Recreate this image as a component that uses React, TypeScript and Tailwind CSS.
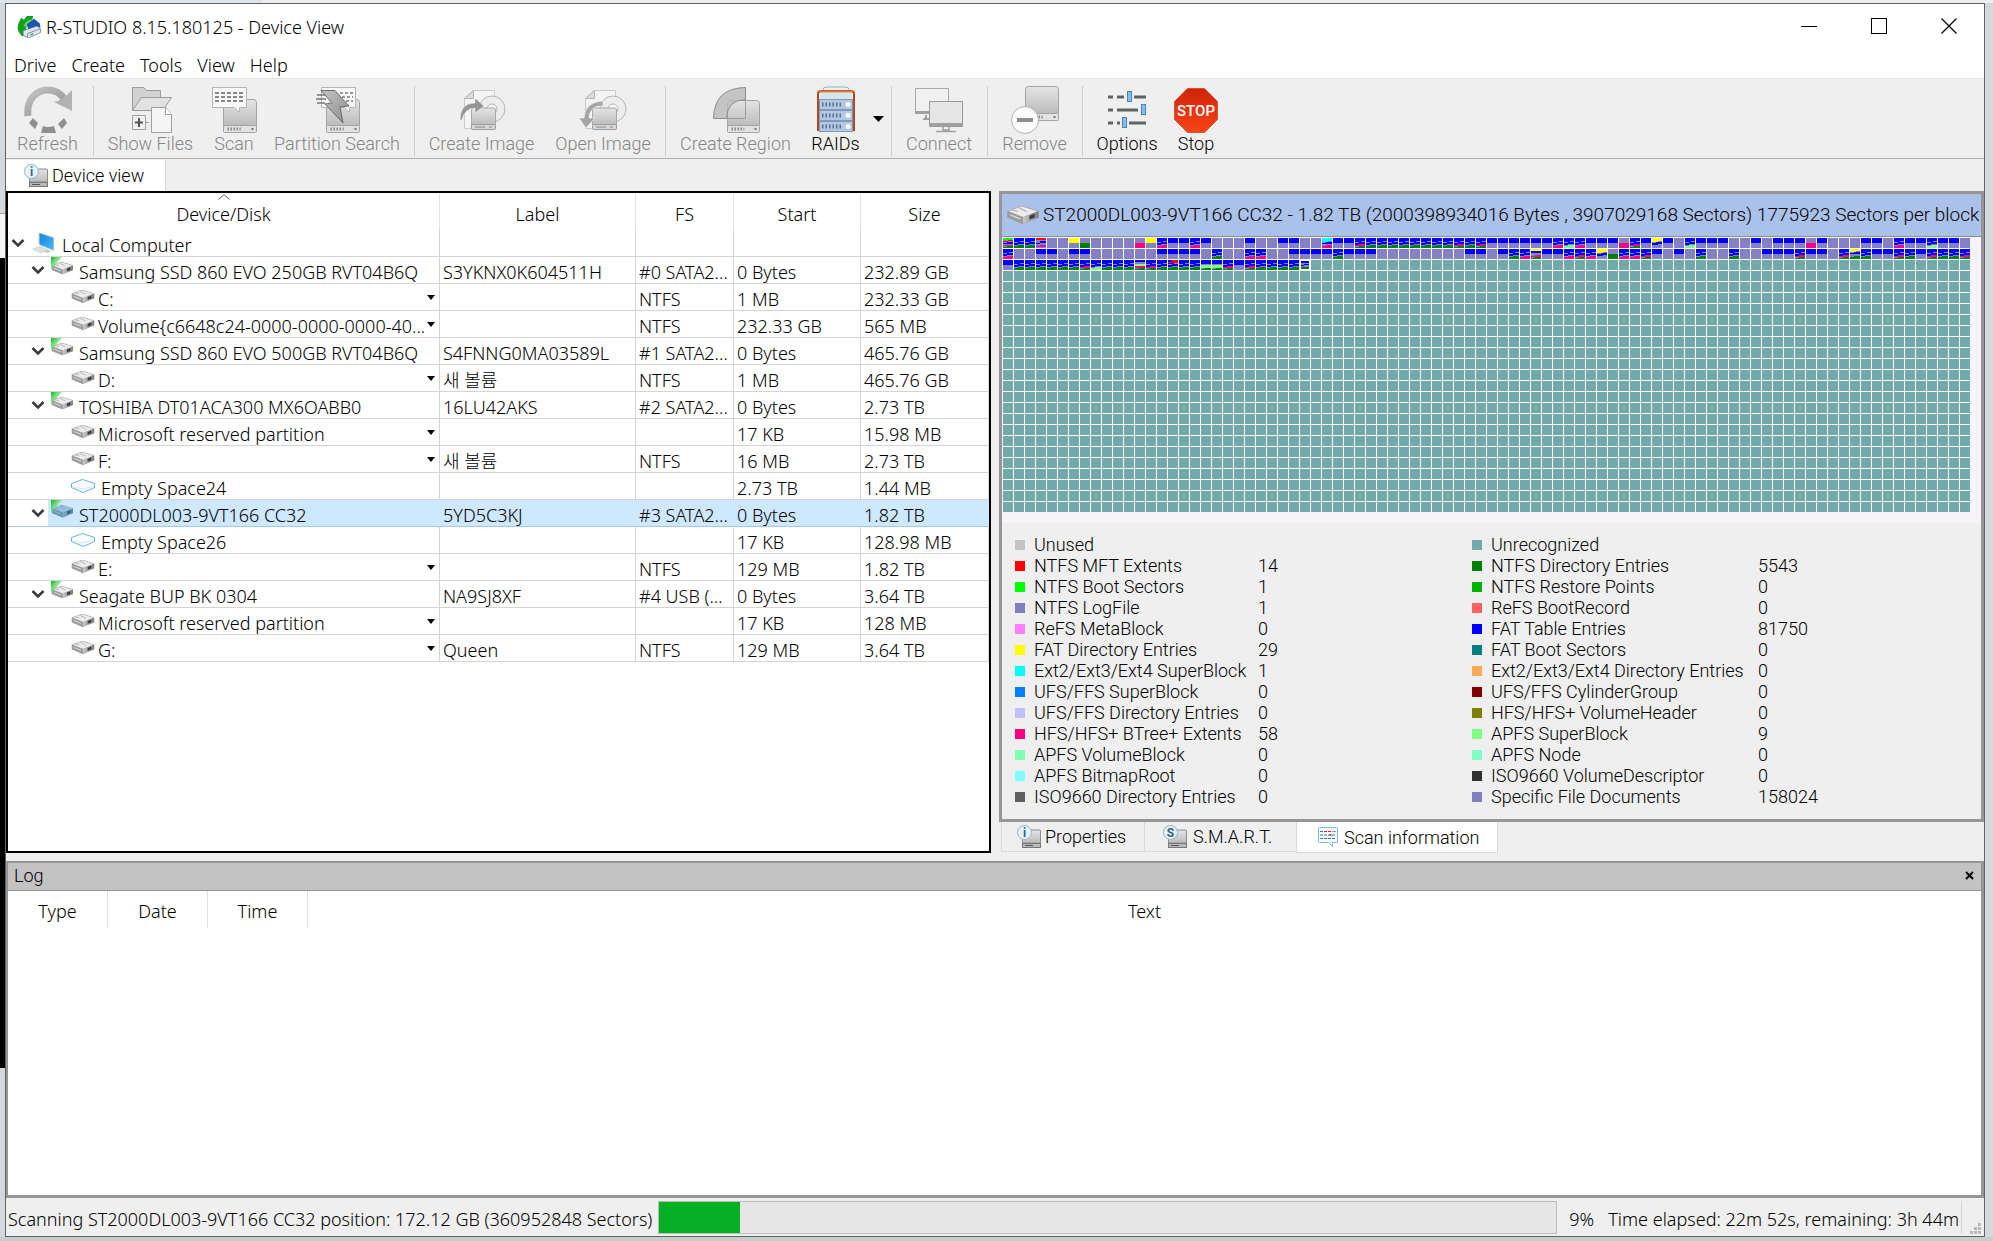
import type { ReactNode } from "react";

type DeviceKind = "computer" | "disk" | "volume" | "empty";

interface DeviceRow {
  kind: DeviceKind;
  name: string;
  label?: string;
  fs?: string;
  start?: string;
  size?: string;
  selected?: boolean;
}

interface LegendItem {
  name: string;
  color: string;
  count?: string;
}

const MENUS = ["Drive", "Create", "Tools", "View", "Help"];

const DEVICES: DeviceRow[] = [
  { kind: "computer", name: "Local Computer" },
  { kind: "disk", name: "Samsung SSD 860 EVO 250GB RVT04B6Q", label: "S3YKNX0K604511H", fs: "#0 SATA2...", start: "0 Bytes", size: "232.89 GB" },
  { kind: "volume", name: "C:", fs: "NTFS", start: "1 MB", size: "232.33 GB" },
  { kind: "volume", name: "Volume{c6648c24-0000-0000-0000-40...", fs: "NTFS", start: "232.33 GB", size: "565 MB" },
  { kind: "disk", name: "Samsung SSD 860 EVO 500GB RVT04B6Q", label: "S4FNNG0MA03589L", fs: "#1 SATA2...", start: "0 Bytes", size: "465.76 GB" },
  { kind: "volume", name: "D:", label: "새 볼륨", fs: "NTFS", start: "1 MB", size: "465.76 GB" },
  { kind: "disk", name: "TOSHIBA DT01ACA300 MX6OABB0", label: "16LU42AKS", fs: "#2 SATA2...", start: "0 Bytes", size: "2.73 TB" },
  { kind: "volume", name: "Microsoft reserved partition", start: "17 KB", size: "15.98 MB" },
  { kind: "volume", name: "F:", label: "새 볼륨", fs: "NTFS", start: "16 MB", size: "2.73 TB" },
  { kind: "empty", name: "Empty Space24", start: "2.73 TB", size: "1.44 MB" },
  { kind: "disk", name: "ST2000DL003-9VT166 CC32", label: "5YD5C3KJ", fs: "#3 SATA2...", start: "0 Bytes", size: "1.82 TB", selected: true },
  { kind: "empty", name: "Empty Space26", start: "17 KB", size: "128.98 MB" },
  { kind: "volume", name: "E:", fs: "NTFS", start: "129 MB", size: "1.82 TB" },
  { kind: "disk", name: "Seagate BUP BK 0304", label: "NA9SJ8XF", fs: "#4 USB (...", start: "0 Bytes", size: "3.64 TB" },
  { kind: "volume", name: "Microsoft reserved partition", start: "17 KB", size: "128 MB" },
  { kind: "volume", name: "G:", label: "Queen", fs: "NTFS", start: "129 MB", size: "3.64 TB" },
];

const LEGEND_LEFT: LegendItem[] = [
  { name: "Unused", color: "#c3c3c3" },
  { name: "NTFS MFT Extents", color: "#ff0000", count: "14" },
  { name: "NTFS Boot Sectors", color: "#00ff00", count: "1" },
  { name: "NTFS LogFile", color: "#8080c0", count: "1" },
  { name: "ReFS MetaBlock", color: "#ff80ff", count: "0" },
  { name: "FAT Directory Entries", color: "#ffff00", count: "29" },
  { name: "Ext2/Ext3/Ext4 SuperBlock", color: "#00ffff", count: "1" },
  { name: "UFS/FFS SuperBlock", color: "#0080ff", count: "0" },
  { name: "UFS/FFS Directory Entries", color: "#c0c0ff", count: "0" },
  { name: "HFS/HFS+ BTree+ Extents", color: "#ff0080", count: "58" },
  { name: "APFS VolumeBlock", color: "#80ffb0", count: "0" },
  { name: "APFS BitmapRoot", color: "#80ffff", count: "0" },
  { name: "ISO9660 Directory Entries", color: "#606060", count: "0" },
];

const LEGEND_RIGHT: LegendItem[] = [
  { name: "Unrecognized", color: "#72aaac" },
  { name: "NTFS Directory Entries", color: "#008000", count: "5543" },
  { name: "NTFS Restore Points", color: "#00b400", count: "0" },
  { name: "ReFS BootRecord", color: "#ff6060", count: "0" },
  { name: "FAT Table Entries", color: "#0000ff", count: "81750" },
  { name: "FAT Boot Sectors", color: "#008080", count: "0" },
  { name: "Ext2/Ext3/Ext4 Directory Entries", color: "#ffa858", count: "0" },
  { name: "UFS/FFS CylinderGroup", color: "#800000", count: "0" },
  { name: "HFS/HFS+ VolumeHeader", color: "#808000", count: "0" },
  { name: "APFS SuperBlock", color: "#80ff80", count: "9" },
  { name: "APFS Node", color: "#80ffc4", count: "0" },
  { name: "ISO9660 VolumeDescriptor", color: "#303030", count: "0" },
  { name: "Specific File Documents", color: "#8080c0", count: "158024" },
];

// One letter per scanned block, see BLOCK_SHAPES
const SCANNED_ROWS = [
  "sggr..yk....pymbbmb...b..bb..cbbMggggggggMgMbbbbbbmlmbbbpMbYb.lbbb..b.bbbpb...bb.mbblbb.",
  "m..bb.bb......bbbb.g..mm..bbbbgbbb........bb.bgmZbbmMmYkmmMb.b.g..g..bbbMbb.MWgbbMgbMggM",
  "bggggggMlgggNMgRgghhMbMggggu",
];

const BLUE = "#0000ff";
const GREEN = "#008000";
const PINK = "#ff0080";
const LIGHT = "#80ff80";

const WAVE = "M0 0h10v3h-4v1h-6zM0 5h4v-1h6v2h-6v1h-4z";
const FOOT = "M0 9h4v-1h6v2h-10z";
const FOOT_HIGH = "M0 8h4v-1h6v3h-10z";

const BLOCK_SHAPES: Record<string, ReactNode> = {
  b: <rect width="10" height="5" fill={BLUE} />,
  g: (
    <>
      <path d={WAVE} fill={BLUE} />
      <path d={FOOT_HIGH} fill={GREEN} />
    </>
  ),
  m: (
    <>
      <path d={WAVE} fill={BLUE} />
      <path d={FOOT_HIGH} fill={PINK} />
    </>
  ),
  l: (
    <>
      <path d={WAVE} fill={BLUE} />
      <path d={FOOT_HIGH} fill={LIGHT} />
    </>
  ),
  h: (
    <>
      <rect width="10" height="4" fill={BLUE} />
      <path d="M0 5h10v3h-10z" fill={LIGHT} />
      <path d={FOOT} fill={GREEN} />
    </>
  ),
  M: (
    <>
      <path d={WAVE} fill={BLUE} />
      <path d="M0 7h4v-1h6v2h-10z" fill={PINK} />
      <path d={FOOT} fill={GREEN} />
    </>
  ),
  N: (
    <>
      <rect width="10" height="2" fill={BLUE} />
      <rect y="4" width="10" height="2" fill={LIGHT} />
      <rect y="6" width="10" height="2" fill={PINK} />
      <path d={FOOT} fill={GREEN} />
    </>
  ),
  R: (
    <>
      <path d={WAVE} fill={BLUE} />
      <path d="M0 2h4v-2h6v3h-10z" fill="#ff0000" />
      <path d={FOOT_HIGH} fill={GREEN} />
    </>
  ),
  r: (
    <>
      <path d="M0 0h10v2h-10z" fill="#ff0000" />
      <path d="M0 5h4v-2h6v2h-6v1h-4z" fill={BLUE} />
      <path d="M0 8h4v-1h6v2h-10z" fill={PINK} />
    </>
  ),
  s: (
    <>
      <path d="M0 0h10v2h-10z" fill="#00ff00" />
      <path d="M0 3h5v-1h5v1h-5v1h-5z" fill="#ff0000" />
      <path d="M0 5h4v-1h6v2h-10z" fill={BLUE} />
      <path d="M0 7h10v1h-10z" fill={PINK} />
      <path d={FOOT} fill={GREEN} />
    </>
  ),
  c: (
    <>
      <path d="M0 0h10v3h-4v1h-6z" fill="#00ffff" />
      <path d="M0 5h4v-1h6v2h-10z" fill={BLUE} />
      <path d={FOOT_HIGH} fill={PINK} />
    </>
  ),
  y: <rect width="10" height="5" fill="#ffff00" />,
  Y: (
    <>
      <path d="M0 0h10v3h-4v1h-6z" fill="#ffff00" />
      <path d="M0 5h4v-1h6v2h-4v1h-6z" fill={BLUE} />
    </>
  ),
  Z: (
    <>
      <path d="M0 0h10v2h-10z" fill="#ffff00" />
      <path d="M0 2h10v2h-10z" fill={BLUE} />
      <path d="M0 7h4v-1h6v2h-10z" fill={PINK} />
      <path d={FOOT} fill={GREEN} />
    </>
  ),
  W: (
    <>
      <path d="M0 0h10v2h-4v1h-6z" fill="#ffff00" />
      <path d="M0 4h4v-1h6v2h-10z" fill={BLUE} />
      <path d={FOOT_HIGH} fill={GREEN} />
    </>
  ),
  k: <rect y="5" width="10" height="5" fill={GREEN} />,
  p: <rect y="5" width="10" height="5" fill={PINK} />,
  u: (
    <>
      <rect width="10" height="10" fill="#ffffff" />
      <rect x="1" y="1" width="8" height="8" fill="#8480c4" />
      <path d="M1 1h8v2h-8zM1 5h3v-1h5v1h-5v1h-3z" fill={BLUE} />
      <path d="M1 7h8v2h-8z" fill={GREEN} />
    </>
  ),
};

function BlockMap() {
  return (
    <svg width="967" height="274" viewBox="0 0 967 274" shapeRendering="crispEdges" role="img" aria-label="Scan block map">
      <defs>
        <pattern id="unrecognized" width="11" height="11" patternUnits="userSpaceOnUse">
          <rect width="11" height="11" fill="#ffffff" />
          <rect width="10" height="10" fill="#72aaac" />
        </pattern>
      </defs>
      <rect width="967" height="274" fill="url(#unrecognized)" />
      {SCANNED_ROWS.map((row, y) =>
        row.split("").map((code, x) => (
          <g key={`${x}-${y}`} transform={`translate(${x * 11} ${y * 11})`}>
            <rect width="10" height="10" fill="#8480c4" />
            {BLOCK_SHAPES[code]}
          </g>
        )),
      )}
    </svg>
  );
}

/* ---------- toolbar icons ---------- */

function Icon48({ children }: { children: ReactNode }) {
  return (
    <svg width="48" height="48" viewBox="0 0 48 48" fill="none" aria-hidden="true">
      {children}
    </svg>
  );
}

function Defs() {
  return (
    <svg className="absolute size-0" aria-hidden="true">
      <defs>
        <linearGradient id="silver" x1="0" y1="0" x2="0" y2="1">
          <stop offset="0" stopColor="#e4e4e4" />
          <stop offset="1" stopColor="#bcbcbc" />
        </linearGradient>
        <linearGradient id="grayFade" x1="0" y1="0" x2="1" y2="1">
          <stop offset="0" stopColor="#c4c4c4" />
          <stop offset="1" stopColor="#8c8c8c" />
        </linearGradient>
        <linearGradient id="stopRed" x1="0" y1="0" x2="0" y2="1">
          <stop offset="0" stopColor="#cc2409" />
          <stop offset="1" stopColor="#fb4418" />
        </linearGradient>
        <linearGradient id="screenBlue" x1="0" y1="0" x2="1" y2="1">
          <stop offset="0" stopColor="#1583dd" />
          <stop offset="1" stopColor="#45b8fb" />
        </linearGradient>
        <linearGradient id="greenCorner" x1="0" y1="0" x2="1" y2="1">
          <stop offset="0" stopColor="#07b814" />
          <stop offset="0.6" stopColor="#8be48f" stopOpacity="0.6" />
          <stop offset="1" stopColor="#ffffff" stopOpacity="0" />
        </linearGradient>
        <linearGradient id="driveSide" x1="0" y1="0" x2="1" y2="0">
          <stop offset="0" stopColor="#c9c9c9" />
          <stop offset="1" stopColor="#7e7e7e" />
        </linearGradient>
      </defs>
    </svg>
  );
}

function TowerDrive({ x, y, w, h }: { x: number; y: number; w: number; h: number }) {
  const base = y + h - 7;
  return (
    <g stroke="#a4a4a4">
      <path d={`M${x} ${base}V${y + 3}q0 -3 3 -3H${x + w - 3}q3 0 3 3V${base}z`} fill="url(#silver)" />
      <rect x={x} y={base} width={w} height="7" rx="1" fill="#e2e2e2" />
      <path d={`M${x + 4} ${base + 3.5}h${w * 0.4}`} stroke="#8a8a8a" strokeWidth="3" strokeDasharray="1.5 1.5" />
      <path d={`M${x + w - 5} ${base + 3.5}h2`} stroke="#777" strokeWidth="2" />
    </g>
  );
}

function RefreshIcon() {
  return (
    <Icon48>
      <path d="M4 30C2 14 12 4 24 4c8 0 13 4 16 9" stroke="url(#grayFade)" strokeWidth="7" />
      <path d="M48 4v21l-18-9q9-2 18-12z" fill="#b2b2b2" />
      <path d="M9 32l5 5-3 6-6-6zM40 32l3 5-5 6-4-5zM19 40q5 2 11 0l2 7H17z" fill="#8f8f8f" />
    </Icon48>
  );
}

function ShowFilesIcon() {
  return (
    <Icon48>
      <path d="M5.500 24.500V1.500h11l3 3h14v7" fill="#d2d2d2" stroke="#9a9a9a" />
      <path d="M5.500 24.500l9-13h30l-9 13z" fill="#e2e2e2" stroke="#9a9a9a" />
      <path d="M24.500 21.500h14l6 7v18h-20z" fill="#f5f5f5" stroke="#a0a0a0" />
      <path d="M38.500 21.500v7h6" fill="#fff" stroke="#a0a0a0" />
      <path d="M5.500 29.500h13v14h-13z" fill="#f1f1f1" stroke="#a0a0a0" />
      <path d="M8 36.500h8M12 32v9" stroke="#555" strokeWidth="2" />
      <path d="M19 36.500h3" stroke="#a0a0a0" />
    </Icon48>
  );
}

function ScanIcon() {
  return (
    <Icon48>
      <TowerDrive x={13.5} y={13.5} w={33} h={33} />
      <path d="M2.500 1.500h34v20h-7v5l-5-5h-22z" fill="#f8f8f8" stroke="#b4b4b4" />
      <path d="M5 7h28M5 11h28M5 15h28" stroke="#888" strokeWidth="2" strokeDasharray="4 2" />
    </Icon48>
  );
}

function PartitionSearchIcon() {
  return (
    <Icon48>
      <TowerDrive x={13.5} y={13.5} w={33} h={33} />
      <path d="M8.500 1.500h34v20h-6v5l-5-5h-23z" fill="#f8f8f8" stroke="#b4b4b4" />
      <path d="M27 7h13M29 11h11M33 15h7" stroke="#999" strokeWidth="2" strokeDasharray="3 2" />
      <path d="M4 9h8M3 13h10M4 17h8" stroke="#777" strokeWidth="1.500" />
      <path d="M8 4.500h14l14 15.500-9 1 3 16-18-19 7-1z" fill="url(#grayFade)" stroke="#6c6c6c" />
    </Icon48>
  );
}

function DiscImageIcon({ open }: { open?: boolean }) {
  return (
    <Icon48>
      <path d="M6.500 42.500v-30l9-8h21v38z" fill="#f4f4f4" stroke="#cacaca" />
      <path d="M6.500 12.500h9v-8z" fill="#dcdcdc" stroke="#b4b4b4" />
      <circle cx="34" cy="23" r="13" fill="#ededed" stroke="#b4b4b4" />
      <circle cx="34" cy="23" r="5" fill="#f8f8f8" stroke="#b4b4b4" />
      <path d="M13.500 39V24q0-2 2-2h20q2 0 2 2v15z" fill="url(#silver)" stroke="#a8a8a8" />
      <rect x="13.500" y="38.500" width="24" height="5" rx="1" fill="#d8d8d8" stroke="#999" />
      <path d="M17 41h10M31 41h3" stroke="#888" />
      {open ? (
        <path d="M24 15v5q-13-1-14 12h6l-9 10-7-10h5Q6 16 24 15z" fill="#a5a5a5" stroke="#fff" strokeWidth="0.500" />
      ) : (
        <path d="M2 34Q2 17 17 17v-5l9 8-9 7v-5Q7 22 4 34z" fill="#959595" stroke="#fff" strokeWidth="0.500" />
      )}
    </Icon48>
  );
}

function CreateRegionIcon() {
  return (
    <Icon48>
      <TowerDrive x={15.5} y={14.5} w={32} h={32} />
      <path d="M1.500 32.500Q2 2 33.500 1.500v12Q15 14 14.500 32.500z" fill="#b9b9b9" fillOpacity="0.800" stroke="#8c8c8c" />
      <path d="M33.500 13v19.500H14" stroke="#9c9c9c" />
    </Icon48>
  );
}

function RaidsIcon() {
  return (
    <Icon48>
      <path d="M11 4q0-3 3-3h20q3 0 3 3" stroke="#8db6c8" />
      <path d="M9 7h30l3 7H6z" fill="#d6e6f0" />
      <path d="M6 45V8q0-3 3-3h30q3 0 3 3v37" stroke="#b8441f" strokeWidth="2" />
      <path d="M7 5.500h34" stroke="#e07a3c" strokeWidth="2" />
      {[13, 24, 35].map((y) => (
        <g key={y}>
          <rect x="7.500" y={y + 0.5} width="33" height="10" fill="#b4c8e2" stroke="#7d9abd" />
          <path d={`M10 ${y + 5.5}h20`} stroke="#54708f" strokeWidth="4" strokeDasharray="1.500 2" />
          <circle cx="36" cy={y + 5.5} r="2.500" fill="#fff" />
        </g>
      ))}
    </Icon48>
  );
}

function ConnectIcon() {
  return (
    <Icon48>
      <path d="M.5 2.500h33v24h-33z" fill="#f1f1f1" stroke="#a8a8a8" />
      <path d="M0 25h15v3H0z" fill="#a0a0a0" />
      <path d="M8 33h7M11 29v4" stroke="#a0a0a0" strokeWidth="2" />
      <path d="M14.500 15.500h33v25h-33z" fill="#e6e6e6" stroke="#999" />
      <path d="M15 37h32v3H15z" fill="#a0a0a0" />
      <path d="M28 41v3h6v-3M21 45.500h20" stroke="#a0a0a0" strokeWidth="1.500" />
    </Icon48>
  );
}

function RemoveIcon() {
  return (
    <Icon48>
      <TowerDrive x={14.5} y={0.5} w={33} h={34} />
      <circle cx="14" cy="34" r="13.500" fill="#fcfcfc" stroke="#b0b0b0" />
      <path d="M6 34h16" stroke="#8e8e8e" strokeWidth="4" />
    </Icon48>
  );
}

function OptionsIcon() {
  return (
    <Icon48>
      <g stroke="#5e6366" strokeWidth="3">
        <path d="M5 11h5M14 11h7M31 11h12M5 24h5M14 24h21M5 37h5M14 37h3M26 37h17" />
      </g>
      <g fill="#86bdf0" stroke="#4d84b8">
        <rect x="24.500" y="5.500" width="4" height="10" />
        <rect x="38.500" y="18.500" width="4" height="10" />
        <rect x="19.500" y="31.500" width="4" height="10" />
      </g>
    </Icon48>
  );
}

function StopIcon() {
  return (
    <Icon48>
      <path d="M15.500 2.500h17l13 13v18l-13 13h-17l-13-13v-18z" fill="url(#stopRed)" stroke="#e2502c" />
      <text x="24" y="30" textAnchor="middle" fontFamily="Roboto" fontSize="15" fontWeight="500" fill="#ffffff">
        STOP
      </text>
    </Icon48>
  );
}

/* ---------- small icons ---------- */

function AppIcon() {
  return (
    <svg width="25" height="22" viewBox="0 0 26 24" aria-hidden="true">
      <path d="M4 2l3 2 3-4h7l-1 4 2 3-9 5 1 9-5 1Q-2 16 1 8z" fill="#14a01c" />
      <path d="M7 10q3-7 11-6l-2 4q-5 0-6 6z" fill="#6fd25c" />
      <path d="M10 9l8-6 6 5 1 4-13 4z" fill="#1c55b4" />
      <path d="M6 16l15-5 4 3v4l-13 6-6-3z" fill="#dfe7f0" stroke="#5b7390" strokeWidth="0.800" />
      <path d="M11 19l14-5M11 19v4" stroke="#5b7390" strokeWidth="0.800" />
      <path d="M14 20.500l3-1" stroke="#12b52a" strokeWidth="1.500" />
    </svg>
  );
}

function DriveShape() {
  return (
    <>
      <path d="M0 4L11 0l13 4v5l-12 5L0 9z" fill="#8b8b8b" />
      <path d="M0 4L11 0l13 4-12 5z" fill="#ececec" stroke="#a8a8a8" strokeWidth="0.600" />
      <path d="M3 3l5 1M9 1.500l6 3" stroke="#b4b4b4" />
      <path d="M0 4l12 4.500V14L0 9z" fill="#9d9d9d" />
      <path d="M2 7l8 3" stroke="#dcdcdc" />
      <path d="M12 8.500L24 4v5l-12 5z" fill="url(#driveSide)" />
      <path d="M17 7.500l4-1.500v3l-4 1.500z" fill="#3c3c3c" />
    </>
  );
}

function VolumeIcon() {
  return (
    <svg width="24" height="13" viewBox="0 0 24 14" aria-hidden="true">
      <DriveShape />
    </svg>
  );
}

function DiskIcon({ selected }: { selected?: boolean }) {
  return (
    <svg width="22" height="18" viewBox="0 0 22 18" aria-hidden="true">
      <g transform="translate(1 5) scale(.88 .88)">
        <DriveShape />
      </g>
      {selected && <path d="M1 9l10-4 11 4v4l-10 5-11-5z" fill="#2f8fd0" fillOpacity="0.450" />}
      <path d="M0 0h11L0 13z" fill="url(#greenCorner)" />
    </svg>
  );
}

function EmptyIcon() {
  return (
    <svg width="24" height="14" viewBox="0 0 24 14" fill="#f8fcff" aria-hidden="true">
      <path d="M.5 4.500l11-4 12 4v4l-11 5-12-5z" stroke="#6db2e4" />
      <path d="M1 8l11 2 11-3" fill="none" stroke="#d6e9f7" />
    </svg>
  );
}

function ComputerIcon() {
  return (
    <svg width="24" height="21" viewBox="0 0 24 22" aria-hidden="true">
      <path d="M7 0l15 5v13L7 12z" fill="url(#screenBlue)" stroke="#9fb9c9" strokeWidth="0.800" />
      <path d="M12 16l8 3-5 2-5-3z" fill="#c4ccd0" />
      <path d="M0 17l8-3 8 4-8 3z" fill="#dfe3e6" stroke="#b3bbc0" strokeWidth="0.500" />
    </svg>
  );
}

function BadgeDriveIcon({ letter }: { letter: string }) {
  return (
    <svg width="24" height="24" viewBox="0 0 24 24" className="shrink-0" aria-hidden="true">
      <path d="M5.500 18V6q0-1 1-1h16q1 0 1 1v12z" fill="url(#silver)" stroke="#8e8e8e" />
      <rect x="5.500" y="18.500" width="18" height="4" fill="#b9b9b9" stroke="#777" />
      <path d="M8 20.500h8" stroke="#555" />
      <circle cx="7.500" cy="7.500" r="7" fill="#e4f2fa" stroke="#8fb4cc" />
      <text x="7.500" y="12" textAnchor="middle" fontFamily="Roboto" fontSize="12" fontWeight="700" fill="#35617f">
        {letter}
      </text>
    </svg>
  );
}

function ScanInfoIcon() {
  return (
    <svg width="20" height="20" viewBox="0 0 20 20" fill="none" aria-hidden="true">
      <path d="M.5 1.500q0-1 1-1h17q1 0 1 1v14h-5v4l-4-4h-9q-1 0-1-1z" fill="#f6fbff" stroke="#86b8dc" />
      <path d="M2 4.500h16M2 8h16M2 11.500h16" stroke="#2d7f99" strokeDasharray="3 1" />
      <path d="M6 4.500h7M11 8h3" stroke="#d02020" strokeDasharray="3 1" />
      <path d="M14 4.500h4" stroke="#6f9fd0" />
    </svg>
  );
}

function Chevron() {
  return (
    <svg width="14" height="10" viewBox="0 0 14 10" fill="none" aria-hidden="true">
      <path d="M1.500 2l5.500 5.500L12.500 2" stroke="#3a3a3a" strokeWidth="2.500" />
    </svg>
  );
}

function DownTriangle({ className }: { className: string }) {
  return (
    <svg viewBox="0 0 10 6" preserveAspectRatio="none" className={className} aria-hidden="true">
      <path d="M0 0h10L5 6z" fill="#000000" />
    </svg>
  );
}

/* ---------- window parts ---------- */

function TitleBar() {
  return (
    <header className="flex h-12 items-center bg-white">
      <div className="flex flex-1 items-center gap-1 pb-0.5 pl-[11px]">
        <AppIcon />
        <h1 className="leading-6">R-STUDIO 8.15.180125 - Device View</h1>
      </div>
      <div className="flex h-11 self-start">
        <button aria-label="Minimize" className="flex w-[70px] items-center justify-center">
          <span className="h-px w-4 bg-black" />
        </button>
        <button aria-label="Maximize" className="flex w-[70px] items-center justify-center">
          <span className="size-4 border border-black" />
        </button>
        <button aria-label="Close" className="flex w-[70px] items-center justify-center">
          <svg width="16" height="16" viewBox="0 0 16 16" aria-hidden="true">
            <path d="M.5.5l15 15M15.500.5l-15 15" stroke="#000" strokeWidth="1.200" />
          </svg>
        </button>
      </div>
    </header>
  );
}

function MenuBar() {
  return (
    <nav className="flex h-[26px] items-center gap-[15px] bg-white pl-2">
      {MENUS.map((menu) => (
        <button key={menu} className="leading-6">
          {menu}
        </button>
      ))}
    </nav>
  );
}

function ToolButton({ label, icon, width, enabled }: { label: string; icon: ReactNode; width: string; enabled?: boolean }) {
  return (
    <button
      disabled={!enabled}
      className={`flex flex-col items-center whitespace-nowrap ${width} ${enabled ? "text-black" : "text-[#858585]"}`}
    >
      {icon}
      <span className="leading-5">{label}</span>
    </button>
  );
}

function Separator() {
  return (
    <span className="flex w-2 justify-center">
      <span className="h-[70px] w-px bg-[#cfcfcf]" />
    </span>
  );
}

function Toolbar() {
  return (
    <div className="mt-px flex h-[79px] border-b border-[#adadad] bg-[#efefef] pt-1.5 font-['Roboto',sans-serif]">
      <ToolButton label="Refresh" icon={<RefreshIcon />} width="w-[83px]" />
      <Separator />
      <ToolButton label="Show Files" icon={<ShowFilesIcon />} width="w-[107px]" />
      <ToolButton label="Scan" icon={<ScanIcon />} width="w-[60px]" />
      <ToolButton label="Partition Search" icon={<PartitionSearchIcon />} width="w-[146px]" />
      <Separator />
      <ToolButton label="Create Image" icon={<DiscImageIcon />} width="w-[127px]" />
      <ToolButton label="Open Image" icon={<DiscImageIcon open />} width="w-[116px]" />
      <Separator />
      <ToolButton label="Create Region" icon={<CreateRegionIcon />} width="w-[133px]" />
      <ToolButton label="RAIDs" icon={<RaidsIcon />} width="w-[67px]" enabled />
      <button aria-label="RAIDs menu" className="flex w-[18px] items-center justify-center self-start pt-[30px]">
        <DownTriangle className="h-1.5 w-[11px]" />
      </button>
      <Separator />
      <ToolButton label="Connect" icon={<ConnectIcon />} width="w-[88px]" />
      <Separator />
      <ToolButton label="Remove" icon={<RemoveIcon />} width="w-[87px]" />
      <Separator />
      <ToolButton label="Options" icon={<OptionsIcon />} width="w-[82px]" enabled />
      <ToolButton label="Stop" icon={<StopIcon />} width="w-[56px]" enabled />
    </div>
  );
}

function DeviceName({ row }: { row: DeviceRow }) {
  if (row.kind === "computer") {
    return (
      <div className="flex h-full items-center pl-[3px]">
        <Chevron />
        <span className="ml-[7px]">
          <ComputerIcon />
        </span>
        <span className="ml-1.5 pt-1">{row.name}</span>
      </div>
    );
  }
  if (row.kind === "disk") {
    return (
      <div className="flex h-full">
        <span className="flex w-10 items-center justify-end pr-[3px]">
          <Chevron />
        </span>
        <div className={`flex flex-1 items-center pl-[3px] ${row.selected ? "bg-[#cde8ff]" : ""}`}>
          <span className="self-start">
            <DiskIcon selected={row.selected} />
          </span>
          <span className="ml-1.5 pt-1">{row.name}</span>
        </div>
      </div>
    );
  }
  return (
    <div className="flex h-full items-center pr-1 pl-[63px]">
      <span className="self-start pt-1.5">{row.kind === "empty" ? <EmptyIcon /> : <VolumeIcon />}</span>
      <span className={`min-w-0 flex-1 pt-1 ${row.kind === "empty" ? "pl-1.5" : "pl-[3px]"}`}>{row.name}</span>
      {row.kind === "volume" && <DownTriangle className="h-[5px] w-2" />}
    </div>
  );
}

function DeviceTree() {
  return (
    <section className="min-w-0 flex-1 overflow-hidden border-2 border-black bg-white">
      <table className="w-full table-fixed border-separate border-spacing-0 whitespace-nowrap">
        <colgroup>
          <col className="w-[432px]" />
          <col className="w-[196px]" />
          <col className="w-[98px]" />
          <col className="w-[127px]" />
          <col />
        </colgroup>
        <thead>
          <tr>
            {["Device/Disk", "Label", "FS", "Start", "Size"].map((title, i) => (
              <th key={title} className="h-[37px] border-r border-[#e5e5e5] p-0 pt-1 font-light">
                <div className="relative leading-8">
                  {i === 0 && (
                    <svg width="12" height="6" viewBox="0 0 12 6" fill="none" className="absolute -top-1 left-1/2 -ml-1.5" aria-hidden="true">
                      <path d="M.5 5.500L6 .5l5.500 5" stroke="#5a5a5a" />
                    </svg>
                  )}
                  {title}
                </div>
              </th>
            ))}
          </tr>
        </thead>
        <tbody>
          {DEVICES.map((row, i) => {
            const line = row.selected ? "border-b-[#a6c8e8] border-r-[#cde8ff]" : "border-[#d4d4d4]";
            const cell = `h-[27px] border-r border-b p-0 leading-[22px] ${line}`;
            return (
              <tr key={i}>
                <td className={cell}>
                  <div className="h-[26px]">
                    <DeviceName row={row} />
                  </div>
                </td>
                {[row.label, row.fs, row.start, row.size].map((text, j) => (
                  <td key={j} className={`${cell} pt-1 pl-[3px] ${row.selected ? "bg-[#cde8ff]" : ""}`}>
                    {text}
                  </td>
                ))}
              </tr>
            );
          })}
        </tbody>
      </table>
    </section>
  );
}

function LegendColumn({ items, valueAt }: { items: LegendItem[]; valueAt: string }) {
  return (
    <dl className="flex w-[457px] flex-col whitespace-nowrap">
      {items.map((item) => (
        <div key={item.name} className="flex h-[21px] items-center leading-[21px]">
          <span className="size-2.5" style={{ backgroundColor: item.color }} />
          <dt className={`pl-[9px] ${valueAt}`}>{item.name}</dt>
          <dd>{item.count}</dd>
        </div>
      ))}
    </dl>
  );
}

function ScanPanel() {
  return (
    <section className="flex min-w-0 flex-1 flex-col font-['Roboto',sans-serif]">
      <div className="border-[3px] border-[#969696]">
        <h2 className="flex h-[43px] items-center overflow-hidden border-b border-[#8e8e96] bg-[#aac1ea] pl-[5px] text-[19px] whitespace-nowrap">
          <svg width="32" height="18" viewBox="0 0 24 14" className="mr-1 shrink-0" aria-hidden="true">
            <DriveShape />
          </svg>
          ST2000DL003-9VT166 CC32 - 1.82 TB (2000398934016 Bytes , 3907029168 Sectors) 1775923 Sectors per block
        </h2>
        <div className="bg-[#f8f3f8] pt-px pb-[11px] pl-px">
          <BlockMap />
        </div>
        <div className="flex bg-[#efefef] pt-[11px] pb-3 pl-[13px]">
          <LegendColumn items={LEGEND_LEFT} valueAt="w-[233px]" />
          <LegendColumn items={LEGEND_RIGHT} valueAt="w-[276px]" />
        </div>
      </div>
      <div role="tablist" className="flex h-[31px] pl-0.5">
        <button role="tab" className="flex h-[30px] w-[144px] items-center gap-1 border-r border-b border-l border-[#d9d9d9] pl-[15px]">
          <BadgeDriveIcon letter="i" />
          Properties
        </button>
        <button role="tab" className="flex h-[30px] w-[151px] items-center gap-1.5 border-b border-[#d9d9d9] pl-[18px]">
          <BadgeDriveIcon letter="S" />
          S.M.A.R.T.
        </button>
        <button
          role="tab"
          aria-selected="true"
          className="flex h-[31px] w-[202px] items-center gap-1.5 border-r border-b border-l border-[#d9d9d9] bg-white pl-[21px]"
        >
          <ScanInfoIcon />
          Scan information
        </button>
      </div>
    </section>
  );
}

function LogPanel() {
  return (
    <section className="flex flex-1 flex-col border-2 border-r-[3px] border-b-[3px] border-[#969696] bg-white">
      <div className="flex h-7 items-center justify-between border-b border-[#969696] bg-[#c3c3c3] pr-1.5 pb-0.5 pl-1.5">
        <h2 className="font-['Roboto',sans-serif] leading-6">Log</h2>
        <button aria-label="Close log" className="p-px">
          <svg width="9" height="9" viewBox="0 0 9 9" aria-hidden="true">
            <path d="M1 1l7 7M8 1L1 8" stroke="#000" strokeWidth="2" />
          </svg>
        </button>
      </div>
      <table className="w-full table-fixed border-separate border-spacing-0">
        <thead>
          <tr>
            {["Type", "Date", "Time"].map((title) => (
              <th key={title} className="h-[37px] w-[100px] border-r border-[#e2e2e2] p-0 pt-1 font-light">
                {title}
              </th>
            ))}
            <th className="p-0 pt-1 font-light">Text</th>
          </tr>
        </thead>
      </table>
    </section>
  );
}

function StatusBar() {
  return (
    <footer className="flex h-[38px] items-center bg-[#efefef] pl-0.5 whitespace-nowrap">
      <span className="w-[650px] pt-1">Scanning ST2000DL003-9VT166 CC32 position: 172.12 GB (360952848 Sectors)</span>
      <div
        role="progressbar"
        aria-label="Scan progress"
        aria-valuenow={9}
        className="h-[33px] flex-1 border border-[#bcbcbc] bg-[#e6e6e6]"
      >
        <div className="h-full bg-[#06b025]" style={{ width: "9%" }} />
      </div>
      <span className="pt-1 pl-3">9%</span>
      <span className="mr-0.5 ml-3.5 pt-1">Time elapsed: 22m 52s, remaining: 3h 44m</span>
      <span className="h-[33px] w-px bg-[#d4d4d4]" />
      <svg width="11" height="11" viewBox="0 0 11 11" className="mr-[3px] mb-0.5 ml-2 self-end" fill="#b8b8b8" aria-hidden="true">
        <path d="M8 0h3v3H8zM4 4h3v3H4zM8 4h3v3H8zM0 8h3v3H0zM4 8h3v3H4zM8 8h3v3H8z" />
      </svg>
    </footer>
  );
}

export default function App() {
  return (
    <div className="flex h-screen flex-col bg-[#d8dcdc] font-['Noto_Sans','Noto_Sans_CJK_KR',sans-serif] text-[18px] font-light text-black">
      <Defs />
      <div className="flex h-[3px] shrink-0">
        <div className="w-[262px] bg-[#dfe4ea]" />
        <div className="flex-1 bg-[#eceef0]" />
      </div>
      <div className="flex min-h-0 flex-1">
        <div className="flex w-[5px] flex-col">
          <div className="h-[210px] bg-[#d3d9dd]" />
          <div className="h-[45px] border-t border-[#a0a0a0] bg-[#f4f4f4]" />
          <div className="h-[810px] bg-black" />
          <div className="flex-1 bg-[#d5d9dd]" />
        </div>
        <main className="flex min-w-0 flex-1 flex-col border border-[#5f6468] bg-[#efefef]">
          <div className="border-b border-[#e6e6e6]">
            <TitleBar />
            <MenuBar />
          </div>
          <Toolbar />
          <div role="tablist" className="flex h-8 pt-px font-['Roboto',sans-serif]">
            <button
              role="tab"
              aria-selected="true"
              className="flex w-[160px] items-center gap-1 border-r border-[#d9d9d9] bg-white pl-[18px]"
            >
              <BadgeDriveIcon letter="i" />
              Device view
            </button>
          </div>
          <div className="flex gap-2">
            <div className="flex min-w-0 flex-1">
              <DeviceTree />
            </div>
            <ScanPanel />
          </div>
          <div className="mt-2 flex flex-1">
            <LogPanel />
          </div>
          <StatusBar />
        </main>
        <div className="w-2 bg-[#d3d8d8]" />
      </div>
      <div className="h-1 shrink-0 bg-[#c9cccc]" />
    </div>
  );
}
